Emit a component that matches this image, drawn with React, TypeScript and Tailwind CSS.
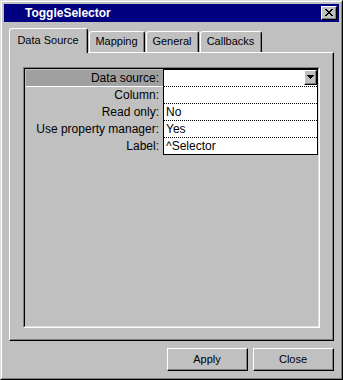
import React from "react";

const FONT = "font-['Liberation_Sans',Arial,sans-serif]";

const ROWS = [
  { label: "Data source:", value: "", combo: true },
  { label: "Column:", value: "" },
  { label: "Read only:", value: "No" },
  { label: "Use property manager:", value: "Yes" },
  { label: "Label:", value: "^Selector" },
];

const TABS = [
  { name: "Data Source", w: "w-[79px]", active: true },
  { name: "Mapping", w: "w-[56px]" },
  { name: "General", w: "w-[53px]" },
  { name: "Callbacks", w: "w-[62px]" },
];

// raised 3D frame used by buttons
function Raised({ className = "", children }: { className?: string; children?: React.ReactNode }) {
  return (
    <div
      className={`border border-t-white border-l-white border-r-black border-b-black bg-[#c0c0c0] ${className}`}
    >
      <div className="flex h-full w-full items-center justify-center border-r border-b border-r-[#808080] border-b-[#808080]">
        {children}
      </div>
    </div>
  );
}

function CloseGlyph() {
  return (
    <svg width="8" height="7" viewBox="0 0 8 7" shapeRendering="crispEdges">
      <path
        d="M0 0h2v1H0zM6 0h2v1H6zM1 1h2v1H1zM5 1h2v1H5zM2 2h4v1H2zM3 3h2v1H3zM2 4h4v1H2zM1 5h2v1H1zM5 5h2v1H5zM0 6h2v1H0zM6 6h2v1H6z"
        fill="#000"
      />
    </svg>
  );
}

function DropArrow() {
  return (
    <svg width="7" height="4" viewBox="0 0 7 4" shapeRendering="crispEdges">
      <path d="M0 0h7v1H0zM1 1h5v1H1zM2 2h3v1H2zM3 3h1v1H3z" fill="#000" />
    </svg>
  );
}

export default function App() {
  return (
    <div className={`${FONT} h-[380px] w-[343px] border border-t-[#dfdfdf] border-l-[#dfdfdf] border-r-black border-b-black bg-[#c0c0c0] text-black`}>
      <div className="flex h-full flex-col border border-t-white border-l-white border-r-[#808080] border-b-[#808080] p-[2px]">
        {/* title bar */}
        <div className="flex h-[18px] items-center bg-[#000080] pl-[21px] pr-[2px]">
          <span className="flex-1 text-[12px] font-bold leading-[18px] text-white">ToggleSelector</span>
          <Raised className="h-[14px] w-[16px]">
            <CloseGlyph />
          </Raised>
        </div>

        <div className="mt-[6px] px-[5px]">
          {/* tabs */}
          <div className="flex h-[24px] items-end">
            {TABS.map((t, i) => (
              <div
                key={t.name}
                className={`${t.w} ${i > 0 ? "ml-[1px]" : ""} ${
                  t.active ? "relative z-10 -mb-px h-[25px] bg-[#c0c0c0]" : "h-[21px]"
                } rounded-t-[3px] border-t border-l border-r border-t-white border-l-white border-r-black`}
              >
                <div
                  className={`h-full border-r border-r-[#808080] text-center text-[11px] leading-[13px] ${
                    t.active ? "pt-[5px]" : "pt-[3px]"
                  }`}
                >
                  {t.name}
                </div>
              </div>
            ))}
          </div>

          {/* tab panel */}
          <div className="h-[289px] border border-t-white border-l-white border-r-black border-b-black">
            <div className="h-full border-r border-b border-r-[#808080] border-b-[#808080] pt-[14px] pl-[13px]">
              {/* sunken property box */}
              <div className="h-[261px] w-[297px] border border-t-[#808080] border-l-[#808080] border-r-white border-b-white">
                <div className="flex h-full border border-t-black border-l-black border-r-[#dfdfdf] border-b-[#dfdfdf]">
                  <div className="w-[138px] pl-px pt-px">
                    {ROWS.map((r, i) => (
                      <div
                        key={r.label}
                        className={`h-[17px] pr-[4px] text-right text-[12px] leading-[16px] ${
                          i === 0 ? "border-b border-b-white bg-[#a0a0a0]" : ""
                        }`}
                      >
                        {r.label}
                      </div>
                    ))}
                  </div>
                  <div className="h-[86px] w-[155px] border border-black bg-white">
                    {ROWS.map((r, i) => (
                      <div
                        key={r.label}
                        className={`flex h-[17px] justify-between pl-[2px] text-[12px] leading-[16px] ${
                          i < ROWS.length - 1 ? "border-b border-dotted border-b-black" : ""
                        }`}
                      >
                        <span>{r.value}</span>
                        {r.combo && (
                          <Raised className="h-[15px] w-[13px]">
                            <DropArrow />
                          </Raised>
                        )}
                      </div>
                    ))}
                  </div>
                </div>
              </div>
            </div>
          </div>
        </div>

        {/* bottom buttons */}
        <div className="mt-[7px] flex justify-end gap-[5px] pr-[5px]">
          <Raised className="h-[23px] w-[81px]">
            <span className="text-[11px] leading-[13px]">Apply</span>
          </Raised>
          <Raised className="h-[23px] w-[81px]">
            <span className="text-[11px] leading-[13px]">Close</span>
          </Raised>
        </div>
      </div>
    </div>
  );
}
